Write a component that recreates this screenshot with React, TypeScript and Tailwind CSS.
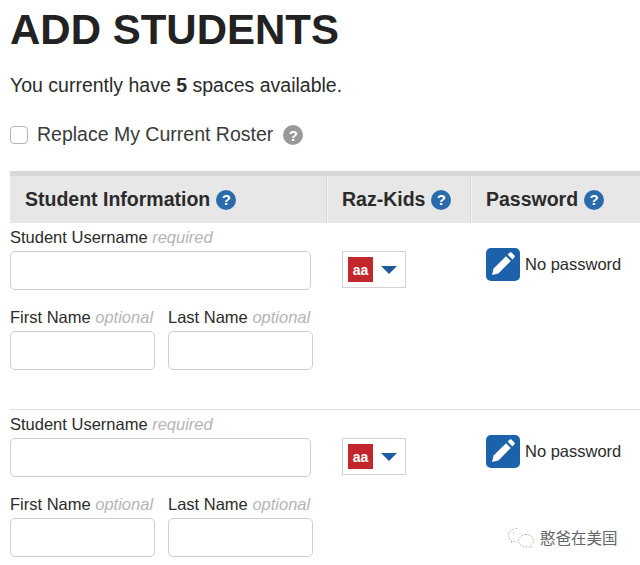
import React from 'react';

const HelpIcon = ({ color = 'bg-[#2a6cab]' }: { color?: string }) => (
  <span className={`inline-flex w-[20px] h-[20px] rounded-full ${color} items-center justify-center text-white text-[15px] font-bold leading-none`}>?</span>
);

const PencilIcon = () => (
  <svg width="34" height="33" viewBox="0 0 34 33" className="shrink-0">
    <rect width="34" height="33" rx="5" fill="#1b62ab" />
    <path d="M6 27l1.6-6.4L20 8.2l4.8 4.8L12.4 25.4z" fill="#fff" />
    <path d="M21.6 6.6l1.8-1.8c.7-.7 1.7-.7 2.4 0l2.4 2.4c.7.7.7 1.7 0 2.4l-1.8 1.8z" fill="#fff" />
  </svg>
);

const WechatIcon = () => (
  <svg width="28" height="22" viewBox="0 0 28 22" fill="none" stroke="#a8a8a8" strokeWidth="0.9" strokeDasharray="1.5 1.5" className="shrink-0">
    <path d="M10 1.5c-4.7 0-8.5 3-8.5 6.8 0 2.1 1.2 4 3 5.2l-.7 2.4 2.8-1.4c1 .3 2 .5 3.2.5" />
    <path d="M19 7.5c-4.2 0-7.5 2.8-7.5 6.2s3.3 6.2 7.5 6.2c1 0 1.9-.2 2.8-.4l2.4 1.3-.6-2.2c1.8-1.1 3-2.9 3-4.9 0-3.4-3.4-6.2-7.6-6.2z" />
    <circle cx="7" cy="6" r="0.6" fill="#a8a8a8" stroke="none" />
    <circle cx="13" cy="6" r="0.6" fill="#a8a8a8" stroke="none" />
  </svg>
);

const StudentRow = ({ last = false }: { last?: boolean }) => (
  <div className={`flex h-[187px] ${last ? '' : 'border-b border-[#dcdcdc]'}`}>
    <div className="w-[318px] pt-[5px] shrink-0">
      <div className="h-[23px] text-[16.5px] leading-[19px] text-[#2b2b2b]">
        Student Username <em className="text-[#b5b5b5]">required</em>
      </div>
      <div className="w-[301px] h-[39px] border border-[#cfcfcf] rounded-[5px]" />
      <div className="flex gap-[13px] mt-[18px]">
        <div>
          <div className="h-[23px] text-[16.5px] leading-[19px] text-[#2b2b2b] whitespace-nowrap">
            First Name <em className="text-[#b5b5b5]">optional</em>
          </div>
          <div className="w-[145px] h-[39px] border border-[#cfcfcf] rounded-[5px]" />
        </div>
        <div>
          <div className="h-[23px] text-[16.5px] leading-[19px] text-[#2b2b2b] whitespace-nowrap">
            Last Name <em className="text-[#b5b5b5]">optional</em>
          </div>
          <div className="w-[145px] h-[39px] border border-[#cfcfcf] rounded-[5px]" />
        </div>
      </div>
    </div>
    <div className="w-[144px] shrink-0 pl-[14px] pt-[28px]">
      <div className="w-[64px] h-[37px] border border-[#d4d4d8] flex items-center pl-[5px] gap-[8px]">
        <span className="w-[25px] h-[25px] bg-[#c1272d] text-white text-[14px] font-bold flex items-center justify-center leading-none">aa</span>
        <span className="w-0 h-0 border-x-[8px] border-x-transparent border-t-[8px] border-t-[#1f5c9e]" />
      </div>
    </div>
    <div className="pl-[14px] pt-[25px] flex items-start gap-[5px]">
      <PencilIcon />
      <span className="text-[16.5px] leading-[19px] mt-[7px] text-[#2b2b2b] whitespace-nowrap">No password</span>
    </div>
  </div>
);

export default function App() {
  return (
    <div className="relative w-[640px] h-[565px] overflow-hidden bg-white pl-[10px] font-['Liberation_Sans',Arial,sans-serif]">
      <h1 className="text-[42px] font-bold leading-[48px] pt-[6px] box-content text-[#222]">ADD STUDENTS</h1>
      <p className="text-[19.5px] leading-[22px] mt-[20px] text-[#2b2b2b]">
        You currently have <b>5</b> spaces available.
      </p>
      <div className="flex items-center mt-[27px] h-[24px]">
        <span className="w-[18px] h-[18px] border border-[#b5b5b5] rounded-[4px] mr-[9px]" />
        <span className="text-[19.5px] text-[#3a3a3a] mr-[10px]">Replace My Current Roster</span>
        <HelpIcon color="bg-[#999]" />
      </div>
      <div className="flex h-[52px] mt-[24px] bg-[#e7e7e8] border-t-[5px] border-[#d8d8d8] font-bold text-[19.5px] text-[#2b2b2b]">
        <div className="w-[316px] pl-[15px] flex items-center gap-[6px] shrink-0">Student Information <HelpIcon /></div>
        <div className="w-[2px] bg-[#f4f4f4] border-l border-[#d8d8d8] shrink-0" />
        <div className="w-[142px] pl-[14px] flex items-center gap-[6px] shrink-0">Raz-Kids <HelpIcon /></div>
        <div className="w-[2px] bg-[#f4f4f4] border-l border-[#d8d8d8] shrink-0" />
        <div className="pl-[14px] flex items-center gap-[6px]">Password <HelpIcon /></div>
      </div>
      <StudentRow />
      <StudentRow last />
      <div className="absolute left-[507px] top-[526px] flex items-center gap-[5px]">
        <WechatIcon />
        <span className="text-[15.5px] text-[#666] font-['Noto_Sans_CJK_SC',sans-serif]">憨爸在美国</span>
      </div>
    </div>
  );
}
